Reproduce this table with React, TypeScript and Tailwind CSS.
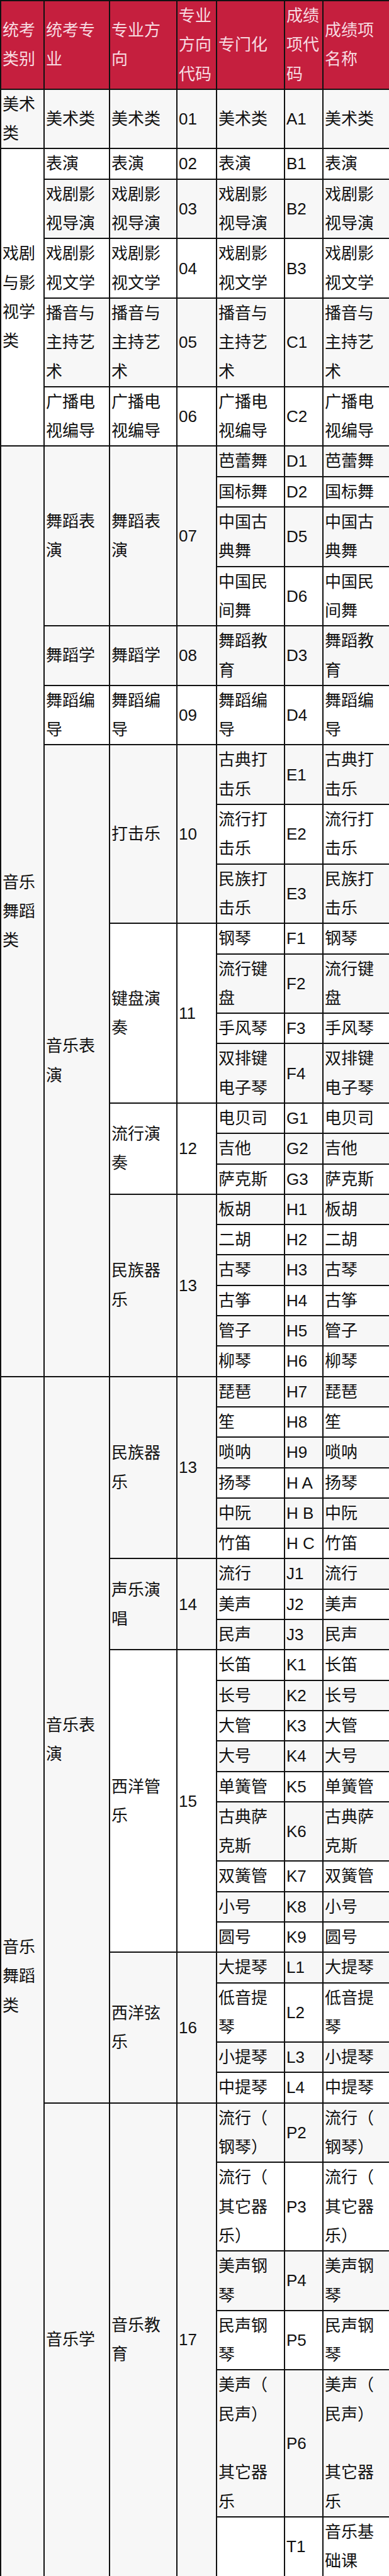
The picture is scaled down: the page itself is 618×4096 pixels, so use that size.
import React from "react";

type Cell = { t: string[]; rs?: number };

const header: string[][] = [
  ["统考", "类别"],
  ["统考专", "业"],
  ["专业方", "向"],
  ["专业", "方向", "代码"],
  ["专门化"],
  ["成绩", "项代", "码"],
  ["成绩项", "名称"],
];

// leaf row: 专门化 / 代码 / 名称 share the same text except the code
const leaf = (name: string[], code: string, title?: string[]): Cell[] => [
  { t: name },
  { t: [code] },
  { t: title ?? name },
];

const same = (t: string[], code: string, name: string[], c2: string): Cell[] => [
  { t },
  { t },
  { t: [code] },
  ...leaf(name, c2),
];

const rows: Cell[][] = [
  [{ t: ["美术", "类"] }, ...same(["美术类"], "01", ["美术类"], "A1")],
  [{ t: ["戏剧", "与影", "视学", "类"], rs: 5 }, ...same(["表演"], "02", ["表演"], "B1")],
  same(["戏剧影", "视导演"], "03", ["戏剧影", "视导演"], "B2"),
  same(["戏剧影", "视文学"], "04", ["戏剧影", "视文学"], "B3"),
  same(["播音与", "主持艺", "术"], "05", ["播音与", "主持艺", "术"], "C1"),
  same(["广播电", "视编导"], "06", ["广播电", "视编导"], "C2"),

  // 音乐舞蹈类 (first part)
  [
    { t: ["音乐", "舞蹈", "类"], rs: 22 },
    { t: ["舞蹈表", "演"], rs: 4 },
    { t: ["舞蹈表", "演"], rs: 4 },
    { t: ["07"], rs: 4 },
    ...leaf(["芭蕾舞"], "D1"),
  ],
  leaf(["国标舞"], "D2"),
  leaf(["中国古", "典舞"], "D5"),
  leaf(["中国民", "间舞"], "D6"),
  same(["舞蹈学"], "08", ["舞蹈教", "育"], "D3"),
  same(["舞蹈编", "导"], "09", ["舞蹈编", "导"], "D4"),
  [
    { t: ["音乐表", "演"], rs: 16 },
    { t: ["打击乐"], rs: 3 },
    { t: ["10"], rs: 3 },
    ...leaf(["古典打", "击乐"], "E1"),
  ],
  leaf(["流行打", "击乐"], "E2"),
  leaf(["民族打", "击乐"], "E3"),
  [{ t: ["键盘演", "奏"], rs: 4 }, { t: ["11"], rs: 4 }, ...leaf(["钢琴"], "F1")],
  leaf(["流行键", "盘"], "F2"),
  leaf(["手风琴"], "F3"),
  leaf(["双排键", "电子琴"], "F4"),
  [{ t: ["流行演", "奏"], rs: 3 }, { t: ["12"], rs: 3 }, ...leaf(["电贝司"], "G1")],
  leaf(["吉他"], "G2"),
  leaf(["萨克斯"], "G3"),
  [{ t: ["民族器", "乐"], rs: 6 }, { t: ["13"], rs: 6 }, ...leaf(["板胡"], "H1")],
  leaf(["二胡"], "H2"),
  leaf(["古琴"], "H3"),
  leaf(["古筝"], "H4"),
  leaf(["管子"], "H5"),
  leaf(["柳琴"], "H6"),

  // 音乐舞蹈类 (second part)
  [
    { t: ["音乐", "舞蹈", "类"], rs: 28 },
    { t: ["音乐表", "演"], rs: 22 },
    { t: ["民族器", "乐"], rs: 6 },
    { t: ["13"], rs: 6 },
    ...leaf(["琵琶"], "H7"),
  ],
  leaf(["笙"], "H8"),
  leaf(["唢呐"], "H9"),
  leaf(["扬琴"], "H A"),
  leaf(["中阮"], "H B"),
  leaf(["竹笛"], "H C"),
  [{ t: ["声乐演", "唱"], rs: 3 }, { t: ["14"], rs: 3 }, ...leaf(["流行"], "J1")],
  leaf(["美声"], "J2"),
  leaf(["民声"], "J3"),
  [{ t: ["西洋管", "乐"], rs: 9 }, { t: ["15"], rs: 9 }, ...leaf(["长笛"], "K1")],
  leaf(["长号"], "K2"),
  leaf(["大管"], "K3"),
  leaf(["大号"], "K4"),
  leaf(["单簧管"], "K5"),
  leaf(["古典萨", "克斯"], "K6"),
  leaf(["双簧管"], "K7"),
  leaf(["小号"], "K8"),
  leaf(["圆号"], "K9"),
  [{ t: ["西洋弦", "乐"], rs: 4 }, { t: ["16"], rs: 4 }, ...leaf(["大提琴"], "L1")],
  leaf(["低音提", "琴"], "L2"),
  leaf(["小提琴"], "L3"),
  leaf(["中提琴"], "L4"),
  [
    { t: ["音乐学"], rs: 6 },
    { t: ["音乐教", "育"], rs: 6 },
    { t: ["17"], rs: 6 },
    ...leaf(["流行（", "钢琴）"], "P2"),
  ],
  leaf(["流行（", "其它器", "乐）"], "P3"),
  leaf(["美声钢", "琴"], "P4"),
  leaf(["民声钢", "琴"], "P5"),
  leaf(["美声（", "民声）", "", "其它器", "乐"], "P6"),
  leaf([""], "T1", ["音乐基", "础课"]),
];

const cellCls =
  "border-2 border-[#111] px-[2px] py-0 align-middle text-left whitespace-nowrap overflow-hidden font-normal";

const Lines: React.FC<{ t: string[] }> = ({ t }) => (
  <>
    {t.map((s, i) => (
      <React.Fragment key={i}>
        {i > 0 && <br />}
        {s === "" ? "\u00a0" : s}
      </React.Fragment>
    ))}
  </>
);

const App: React.FC = () => {
  return (
    <div className="w-[618px] bg-white">
      <table className="w-[618px] table-fixed border-collapse font-['Liberation_Sans','Noto_Sans_CJK_SC',sans-serif] text-[26px] leading-[46.3px] text-[#111]">
        <colgroup>
          <col className="w-[69px]" />
          <col className="w-[104px]" />
          <col className="w-[107px]" />
          <col className="w-[63px]" />
          <col className="w-[108px]" />
          <col className="w-[61px]" />
          <col className="w-[106px]" />
        </colgroup>

        {/* Header */}
        <thead>
          <tr className="bg-[#c51f3e] text-[#f7dbe1]">
            {header.map((h, i) => (
              <th key={i} className={cellCls}>
                <Lines t={h} />
              </th>
            ))}
          </tr>
        </thead>

        {/* Body */}
        <tbody>
          {rows.map((row, r) => (
            <tr key={r} className={r % 2 === 0 ? "bg-[#f7f7f7]" : "bg-white"}>
              {row.map((c, i) => (
                <td key={i} rowSpan={c.rs} className={cellCls}>
                  <Lines t={c.t} />
                </td>
              ))}
            </tr>
          ))}
        </tbody>
      </table>
    </div>
  );
};

export default App;
